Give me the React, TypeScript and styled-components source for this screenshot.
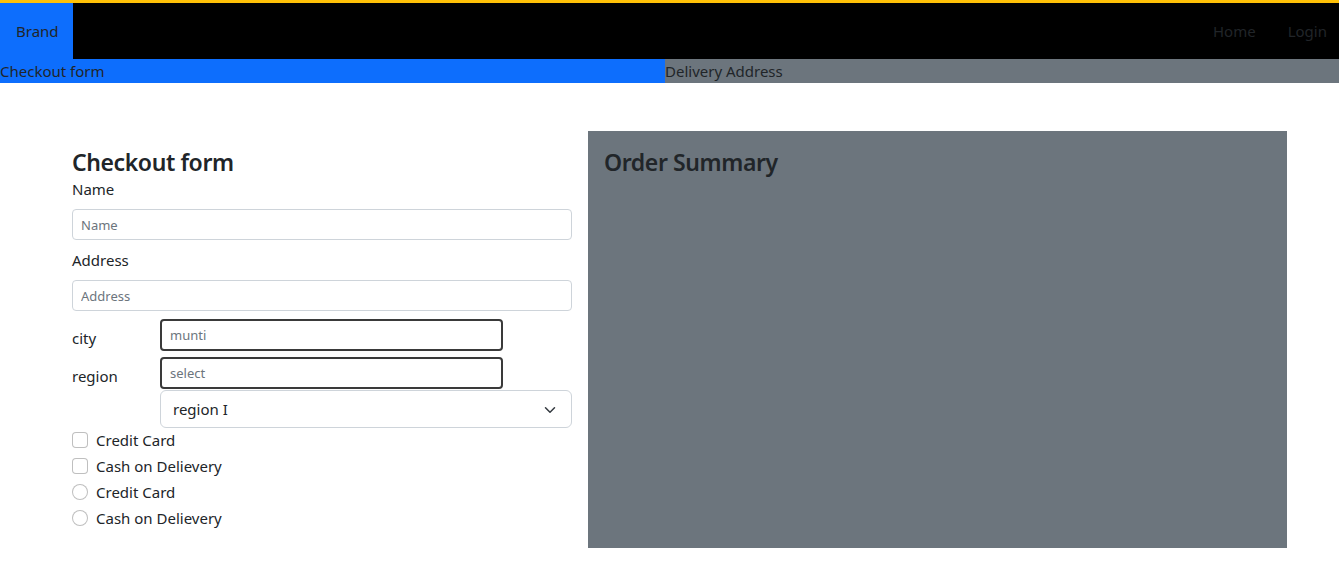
import styled, { createGlobalStyle } from "styled-components";

const GlobalStyle = createGlobalStyle`
  * { box-sizing: border-box; }
  body {
    margin: 0;
    font-family: "Noto Sans", "Open Sans", sans-serif;
    font-size: 16px;
    line-height: 1.5;
    color: #212529;
    background: #fff;
  }
`;

const NavBar = styled.nav`
  display: flex;
  align-items: stretch;
  height: 59px;
  background: #000;
  border-top: 3px solid #ffc107;
`;

const Brand = styled.a`
  display: flex;
  align-items: center;
  width: 73px;
  padding-left: 16px;
  background: #0d6efd;
  color: #212529;
  font-size: 15px;
`;

const NavLinks = styled.div`
  display: flex;
  align-items: center;
  margin-left: auto;
  padding-right: 12px;
`;

const NavLink = styled.a`
  color: #212529;
  font-size: 15px;
  padding: 0 16px;
  &:last-child {
    padding-right: 0;
  }
`;

const Steps = styled.div`
  display: flex;
  height: 24px;
  line-height: 24px;
`;

const Step = styled.div<{ $bg: string; $width?: number }>`
  flex: ${(p) => (p.$width ? `0 0 ${p.$width}px` : "1")};
  background: ${(p) => p.$bg};
  color: #212529;
  font-size: 15px;
`;

const Page = styled.main`
  display: flex;
  gap: 16px;
  margin-top: 48px;
  padding-left: 72px;
  align-items: stretch;
`;

const FormCol = styled.form`
  width: 500px;
  padding: 17px 0 16px;
`;

const SummaryCol = styled.section`
  width: 699px;
  background: #6c757d;
  padding: 17px 16px;
`;

const Heading = styled.h4`
  margin: 0;
  font-size: 23px;
  font-weight: 600;
  line-height: 29px;
  letter-spacing: -0.4px;
`;

const Label = styled.label`
  display: block;
  font-size: 15px;
  line-height: 24px;
  margin-bottom: 8px;
`;

const Field = styled.input`
  display: block;
  width: 100%;
  height: 31px;
  padding: 0 8px;
  font-family: inherit;
  font-size: 13px;
  border: 1px solid #ced4da;
  border-radius: 4px;
  margin-bottom: 8px;
  &::placeholder {
    color: #6c757d;
  }
`;

const InlineRow = styled.div<{ $mb: number }>`
  display: flex;
  align-items: flex-end;
  margin-bottom: ${(p) => p.$mb}px;
`;

const InlineLabel = styled.label`
  width: 88px;
  font-size: 15px;
  line-height: 24px;
  margin-bottom: 1px;
`;

const DarkField = styled.input`
  width: 343px;
  height: 32px;
  padding: 0 8px;
  font-family: inherit;
  font-size: 13px;
  border: 2px solid #3a3a3a;
  border-radius: 4px;
  &::placeholder {
    color: #6c757d;
  }
`;

const SelectWrap = styled.div`
  position: relative;
  margin-left: 88px;
  width: 412px;
  height: 38px;
  border: 1px solid #ced4da;
  border-radius: 6px;
  display: flex;
  align-items: center;
  padding: 0 36px 0 12px;
  font-size: 15px;
`;

const Chevron = styled.svg`
  position: absolute;
  right: 14px;
  top: 13px;
`;

const Check = styled.div`
  display: flex;
  align-items: center;
  gap: 8px;
  height: 24px;
  margin-bottom: 2px;
  font-size: 15px;
`;

const Box = styled.span<{ $round?: boolean }>`
  width: 16px;
  height: 16px;
  border: 1px solid rgba(0, 0, 0, 0.25);
  border-radius: ${(p) => (p.$round ? "50%" : "4px")};
  background: #fff;
`;

const options = [
  { label: "Credit Card", round: false },
  { label: "Cash on Delievery", round: false },
  { label: "Credit Card", round: true },
  { label: "Cash on Delievery", round: true },
];

export default function App() {
  return (
    <>
      <GlobalStyle />
      <NavBar>
        <Brand>Brand</Brand>
        <NavLinks>
          <NavLink>Home</NavLink>
          <NavLink>Login</NavLink>
        </NavLinks>
      </NavBar>
      <Steps>
        <Step $bg="#0d6efd" $width={665}>Checkout form</Step>
        <Step $bg="#6c757d">Delivery Address</Step>
      </Steps>
      <Page>
        <FormCol>
          <Heading>Checkout form</Heading>
          <Label>Name</Label>
          <Field placeholder="Name" />
          <Label>Address</Label>
          <Field placeholder="Address" />
          <InlineRow $mb={6}>
            <InlineLabel>city</InlineLabel>
            <DarkField placeholder="munti" />
          </InlineRow>
          <InlineRow $mb={1}>
            <InlineLabel>region</InlineLabel>
            <DarkField placeholder="select" />
          </InlineRow>
          <SelectWrap>
            region I
            <Chevron width="14" height="12" viewBox="0 0 16 16">
              <path d="M2 5l6 6 6-6" fill="none" stroke="#343a40" strokeWidth="2" strokeLinecap="round" strokeLinejoin="round" />
            </Chevron>
          </SelectWrap>
          {options.map((o, i) => (
            <Check key={i}>
              <Box $round={o.round} />
              {o.label}
            </Check>
          ))}
        </FormCol>
        <SummaryCol>
          <Heading>Order Summary</Heading>
        </SummaryCol>
      </Page>
    </>
  );
}
